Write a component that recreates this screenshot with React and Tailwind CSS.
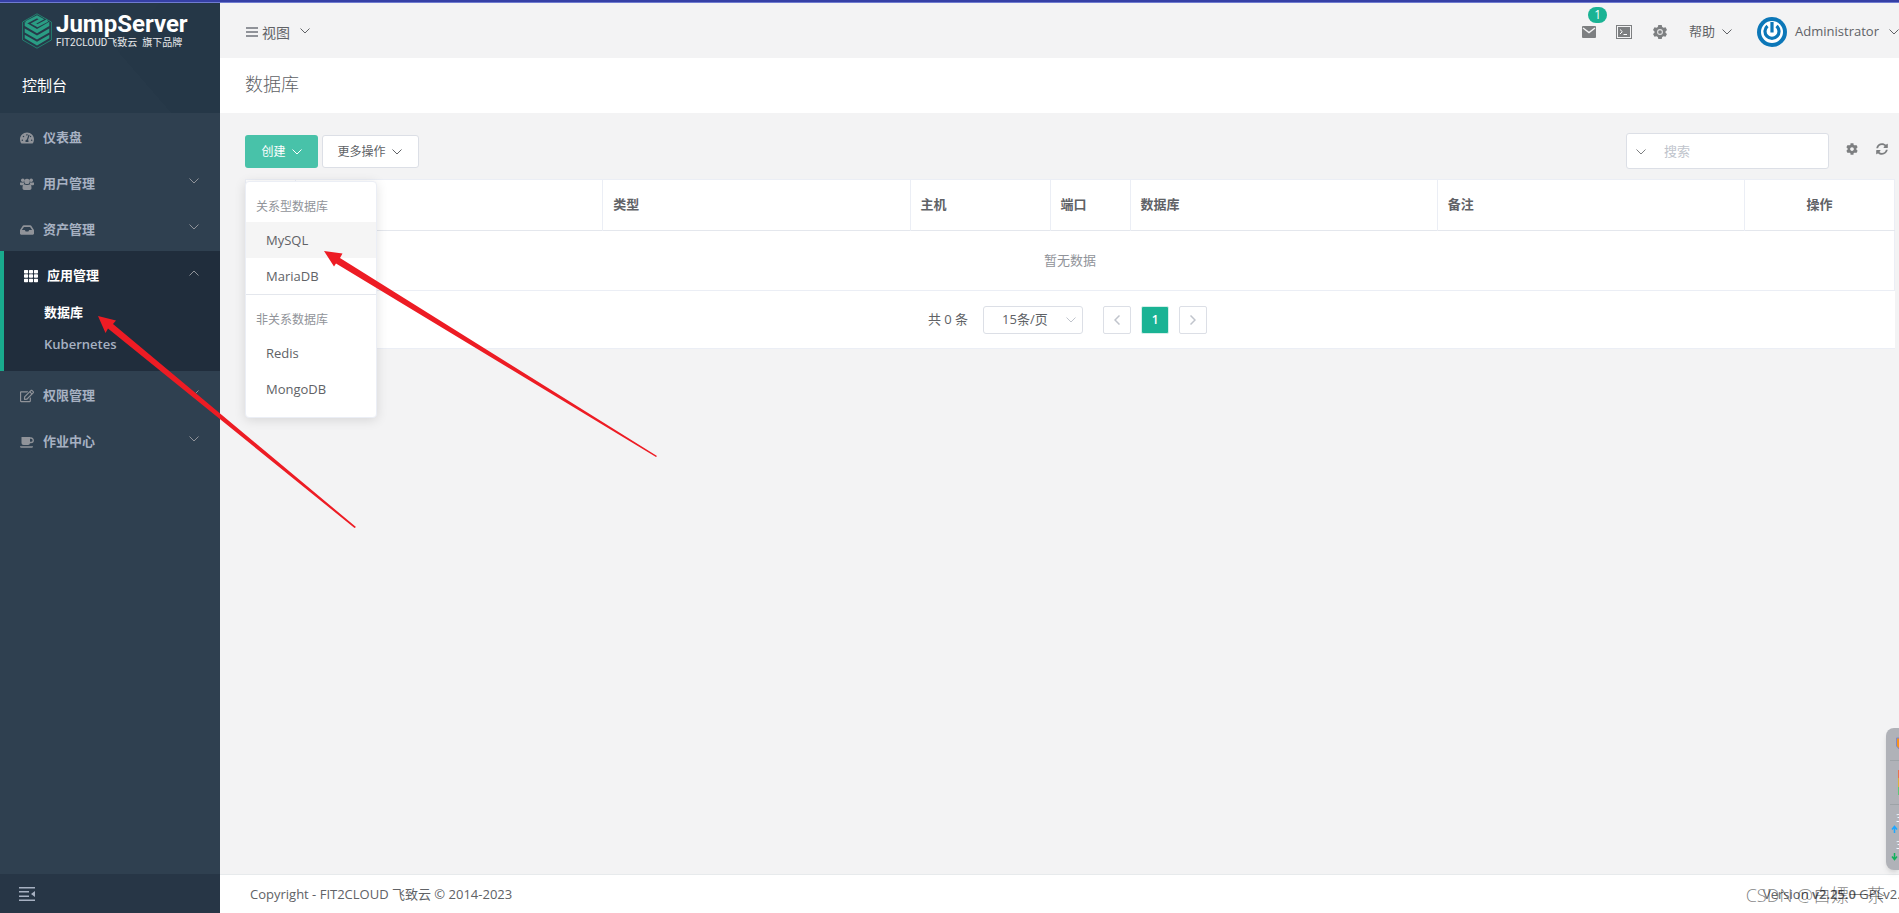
import { useState } from 'react'
import { FaTachometerAlt, FaInbox, FaTh, FaRegEdit, FaCog, FaSyncAlt } from 'react-icons/fa'

function UsersIcon({ className }) {
  return (
    <span className={className}>
      <svg viewBox="0 0 14 12" className="h-3 w-[14px]" fill="currentColor">
        <circle cx="2.8" cy="2.3" r="1.8" />
        <circle cx="11.2" cy="2.3" r="1.8" />
        <circle cx="7" cy="3.4" r="2.7" />
        <path d="M0 4.500h4C4 6 4.300 6.400 3 7.200H.8C.2 7.200 0 6.800 0 6ZM14 4.500h-4c0 1.500-.3 1.900 1 2.700h2.200c.6 0 .8-.4.800-1.200Z" />
        <path d="M3.800 6.200c2 1.100 4.400 1.100 6.400 0 1 .6 1.300 1.900 1.300 3.800 0 1.300-.6 2-1.900 2H4.400c-1.300 0-1.900-.7-1.900-2 0-1.900.3-3.200 1.300-3.800Z" />
      </svg>
    </span>
  )
}

function CoffeeIcon({ className }) {
  return (
    <span className={className}>
      <svg viewBox="0 0 14 11" className="h-[11px] w-[14px]" fill="currentColor">
        <path d="M1.500 0H10v6a2 2 0 0 1-2 2H3.500a2 2 0 0 1-2-2Z" />
        <path d="M10 1h1a2 2 0 0 1 0 4.500h-1" fill="none" stroke="currentColor" strokeWidth="1.300" />
        <path d="M0 9.300h13c0 1-.8 1.500-1.600 1.500H1.600C.8 10.800 0 10.300 0 9.300Z" />
      </svg>
    </span>
  )
}

const menus = [
  { label: '仪表盘', icon: FaTachometerAlt },
  { label: '用户管理', icon: UsersIcon, more: true },
  { label: '资产管理', icon: FaInbox, more: true },
  { label: '应用管理', icon: FaTh, more: true, children: ['数据库', 'Kubernetes'] },
  { label: '权限管理', icon: FaRegEdit, more: true },
  { label: '作业中心', icon: CoffeeIcon, more: true },
]

const createGroups = [
  { title: '关系型数据库', items: ['MySQL', 'MariaDB'] },
  { title: '非关系数据库', items: ['Redis', 'MongoDB'] },
]

function Chevron({ className = '' }) {
  return (
    <svg viewBox="0 0 10 6" className={`h-[6px] w-[10px] shrink-0 ${className}`} fill="none" stroke="currentColor">
      <path d="M0.5 0.5 L5 5 L9.5 0.5" />
    </svg>
  )
}

function Logo() {
  return (
    <a href="#" className="flex items-center gap-1 text-white">
      <svg viewBox="0 0 30 36" className="h-9 w-[30px] shrink-0">
        <path d="M15 .8 29.4 9v18L15 35.2.6 27V9Z" fill="none" stroke="#23806f" strokeWidth="1" />
        <path
          d="M4 9.500 15 3.800 19.500 6.300 11.500 10.600 15.500 12.700 25.500 7.500"
          fill="none"
          stroke="#2a9d84"
          strokeWidth="2.700"
        />
        <path d="M2.700 8.800 15 16 27.300 8.800V13L15 20.300 2.700 13Z" fill="#2a9d84" />
        <path d="M2.700 15.500 15 22.500 27.300 15.500v4L15 26.600 2.700 19.500Z" fill="#2a9d84" />
        <path d="M2.700 21.700 15 28.700 27.300 21.700v3.600L15 32.500 2.700 25.300Z" fill="#2a9d84" />
      </svg>
      <span className="flex flex-col gap-px">
        <span className="font-['Roboto'] text-[24px] leading-6 font-bold">JumpServer</span>
        <span className="font-['Roboto','Noto_Sans_CJK_SC',sans-serif] text-[10px] leading-3 whitespace-pre text-white/90">
          FIT2CLOUD飞致云  旗下品牌
        </span>
      </span>
    </a>
  )
}

function Sidebar() {
  return (
    <aside className="flex w-[220px] shrink-0 flex-col bg-[#2f4050]">
      <div className="relative flex h-[110px] flex-col bg-[#263848] px-[22px] pt-[9px]">
        <svg viewBox="0 0 220 110" className="absolute inset-0 h-full w-full" preserveAspectRatio="none">
          <path d="M0 0h90l30 50 52 60H0Z" fill="#273949" />
          <path d="M120 50 160 0h60v110h-48Z" fill="#253747" />
        </svg>
        <div className="relative">
          <Logo />
          <h2 className="mt-6 text-[15px] leading-6 text-white">控制台</h2>
        </div>
      </div>

      <nav className="flex-1 text-[13px] font-semibold text-[#a7b1c2]">
        {menus.map(({ label, icon: Icon, more, children }) => (
          <div key={label} className={children ? 'border-l-4 border-[#19aa8d] bg-[#202d3c] pb-[10px] text-white' : ''}>
            <a href="#" className="flex h-[46px] items-center px-5 pt-1">
              <Icon className={children ? 'w-[23px] shrink-0 pr-[9px] text-sm' : 'w-[23px] shrink-0 pr-[9px] text-sm text-[#909399]'} />
              <span className="flex-1">{label}</span>
              {more && (
                <Chevron className={children ? 'mr-px mb-[6px] rotate-180 text-[#909399]' : 'mr-px mb-[6px] text-[#909399]'} />
              )}
            </a>
            {children?.map((child, i) => (
              <a
                key={child}
                href="#"
                className={i === 0 ? 'flex h-8 items-center pl-10 text-white' : 'flex h-8 items-center pl-10 text-[#a7b1c2]'}
              >
                {child}
              </a>
            ))}
          </div>
        ))}
      </nav>

      <div className="flex h-[39px] items-center bg-[#273646] pl-[19px]">
        <button type="button" aria-label="收起菜单" className="text-[#a7b1c2]">
          <svg viewBox="0 0 16 14" className="h-[14px] w-4" fill="currentColor">
            <path d="M0 0h16v1.5H0ZM0 4h10v1.5H0ZM0 8.5h10V10H0ZM0 12.5h16V14H0ZM16 4v6l-4-3Z" />
          </svg>
        </button>
      </div>
    </aside>
  )
}

function Header() {
  return (
    <header className="flex h-[55px] items-center justify-between bg-[#f3f3f4] pl-[26px]">
      <button type="button" className="flex items-center pt-1 text-sm">
        <svg viewBox="0 0 12 10" className="mr-1 mb-px h-[10px] w-3" fill="#909399">
          <path d="M0 0h12v2H0ZM0 4h12v2H0ZM0 8h12v2H0Z" />
        </svg>
        视图
        <Chevron className="mb-1 ml-[10px]" />
      </button>

      <div className="flex items-center pt-[2px]">
        <button type="button" aria-label="站内信" className="relative mr-5 text-[#7d7f81]">
          <svg viewBox="0 0 14 12" className="h-3 w-[14px]" fill="currentColor">
            <rect width="14" height="12" rx="1" />
            <path d="M1 2 7 6.5 13 2" fill="none" stroke="#f3f3f4" strokeWidth="1.4" />
          </svg>
          <span className="absolute -top-[19px] left-[6px] h-4 w-[19px] rounded-full bg-[#1ab394] text-center text-xs leading-4 text-white">
            1
          </span>
        </button>
        <button type="button" aria-label="终端" className="mr-[21px] text-[#7d7f81]">
          <svg viewBox="0 0 16 14" className="h-[14px] w-4" fill="none" stroke="currentColor">
            <rect x=".5" y=".5" width="15" height="13" />
            <rect x="2" y="2" width="12" height="10" fill="currentColor" stroke="none" />
            <path d="M4 4.5 6.3 6.7 4 9M7.5 9.5h3.5" stroke="#fff" />
          </svg>
        </button>
        <button type="button" aria-label="设置" className="mr-[22px] text-[#7d7f81]">
          <svg viewBox="0 0 14 14" className="h-[14px] w-[14px]">
            <path
              d="M5.3 0h3.4l.5 2 1.4.8 2-.6 1.4 2.9L12.5 6.400v1.300l1.500 1.300-1.500 2.800-2-.5-1.300.8-.5 1.900H5.300l-.5-1.900-1.300-.8-2 .5L0 9l1.500-1.300V6.400L0 5.100l1.500-2.900 2 .6L4.800 2Z"
              fill="currentColor"
            />
            <circle cx="7" cy="7" r="2.4" fill="none" stroke="#e3e3e4" strokeWidth="1.100" />
          </svg>
        </button>
        <button type="button" className="mr-[25px] flex items-center text-[13px]">
          帮助
          <Chevron className="ml-[7px]" />
        </button>
        <button type="button" className="flex items-center text-[13px]">
          <svg viewBox="0 0 30 30" className="mr-2 h-[30px] w-[30px]" fill="none">
            <circle cx="15" cy="15" r="15" fill="#0c77b8" />
            <circle cx="15" cy="15" r="11" fill="#fff" />
            <path d="M10.500 9a7 7 0 1 0 9 0" stroke="#0c77b8" strokeWidth="3.200" />
            <path d="M15 5v10.500" stroke="#0c77b8" strokeWidth="3.200" />
          </svg>
          Administrator
          <Chevron className="ml-[10px]" />
        </button>
      </div>
    </header>
  )
}

function CreateMenu() {
  return (
    <div className="absolute top-[46px] left-0 z-10 w-[132px] rounded border border-[#ebeef5] bg-white pb-[10px] shadow-[0_2px_12px_rgba(0,0,0,0.12)]">
      {createGroups.map((group, i) => (
        <div key={group.title} className={i > 0 ? 'border-t border-[#e4e7ed] pt-[10px]' : 'pt-[10px]'}>
          <div className="px-[10px] text-xs leading-[30px] text-[#909399]">{group.title}</div>
          {group.items.map((item) => (
            <button
              key={item}
              type="button"
              className={
                item === 'MySQL'
                  ? 'block w-full bg-[#f5f5f5] px-5 text-left text-[13px] leading-9'
                  : 'block w-full px-5 text-left text-[13px] leading-9'
              }
            >
              {item}
            </button>
          ))}
        </div>
      ))}
    </div>
  )
}

function Toolbar() {
  const [open, setOpen] = useState(true)

  return (
    <div className="flex items-center justify-between pr-[7px]">
      <div className="flex gap-1">
        <div className="relative">
          <button
            type="button"
            onClick={() => setOpen(!open)}
            className="flex h-[33px] w-[73px] items-center justify-center gap-[6px] rounded-[3px] bg-[#48c2a9] pt-[2px] text-xs text-white"
          >
            创建
            <Chevron />
          </button>
          {open && <CreateMenu />}
        </div>
        <button
          type="button"
          className="flex h-[33px] w-[97px] items-center justify-center gap-[6px] rounded-[3px] border border-[#dcdfe6] bg-white pt-[2px] pr-[2px] text-xs"
        >
          更多操作
          <Chevron />
        </button>
      </div>

      <div className="flex items-center text-[#7d7f81]">
        <div className="mr-[17px] flex h-9 w-[203px] items-center rounded-[3px] border border-[#dcdfe6] bg-white pt-[2px] pl-[9px]">
          <Chevron />
          <input
            type="text"
            aria-label="搜索"
            placeholder="搜索"
            className="ml-[18px] w-full min-w-0 text-[13px] outline-none placeholder:text-[#c0c4cc]"
          />
        </div>
        <button type="button" aria-label="列设置" className="mr-[18px] pb-1">
          <FaCog className="h-3 w-3" />
        </button>
        <button type="button" aria-label="刷新" className="pb-1">
          <FaSyncAlt className="h-3 w-3" />
        </button>
      </div>
    </div>
  )
}

function DatabaseTable() {
  const th = 'border-r border-[#ebeef5] px-[10px] text-left font-semibold'

  return (
    <table className="w-full table-fixed border border-[#ebeef5] bg-white text-[13px]">
      <colgroup>
        <col className="w-[50px]" />
        <col />
        <col />
        <col className="w-[140px]" />
        <col className="w-[80px]" />
        <col />
        <col />
        <col className="w-[150px]" />
      </colgroup>
      <thead>
        <tr className="h-[51px] border-b border-[#e4e7ed]">
          <th className={th}>
            <input type="checkbox" aria-label="全选" />
          </th>
          <th className={th} />
          <th className={th}>类型</th>
          <th className={th}>主机</th>
          <th className={th}>端口</th>
          <th className={th}>数据库</th>
          <th className={th}>备注</th>
          <th className="text-center font-semibold">操作</th>
        </tr>
      </thead>
      <tbody>
        <tr className="h-[60px]">
          <td colSpan={8} className="text-center text-[#909399]">
            暂无数据
          </td>
        </tr>
      </tbody>
    </table>
  )
}

function Pagination() {
  return (
    <div className="flex h-[58px] items-center justify-center border-b border-[#ebeef5] bg-white pr-[5px] text-[13px]">
      <span className="mr-[15px]">共 0 条</span>
      <div className="relative mr-5 flex items-center">
        <select
          aria-label="每页条数"
          className="h-7 w-[100px] appearance-none rounded-[3px] border border-[#dcdfe6] bg-white pl-[18px] outline-none"
        >
          <option>15条/页</option>
        </select>
        <Chevron className="pointer-events-none absolute right-[7px] text-[#c0c4cc]" />
      </div>
      <div className="flex gap-[10px]">
        <button
          type="button"
          aria-label="上一页"
          className="flex h-7 w-7 items-center justify-center rounded-xs border border-[#dcdfe6] text-[#c0c4cc]"
        >
          <svg viewBox="0 0 6 10" className="h-[10px] w-[6px]" fill="none" stroke="currentColor" strokeWidth="1.5">
            <path d="M5.500.5 1 5l4.500 4.500" />
          </svg>
        </button>
        <button type="button" className="h-7 w-7 rounded-xs border border-[#d4efe9] bg-[#1ab394] text-xs font-semibold text-white">
          1
        </button>
        <button
          type="button"
          aria-label="下一页"
          className="flex h-7 w-7 items-center justify-center rounded-xs border border-[#dcdfe6] text-[#c0c4cc]"
        >
          <svg viewBox="0 0 6 10" className="h-[10px] w-[6px]" fill="none" stroke="currentColor" strokeWidth="1.5">
            <path d="M.5.5 5 5 .5 9.500" />
          </svg>
        </button>
      </div>
    </div>
  )
}

function Footer() {
  return (
    <footer className="relative flex h-[39px] items-center justify-between overflow-hidden border-t border-[#e7eaec] bg-white pt-[2px] pl-[30px] text-[13px]">
      <span>Copyright - FIT2CLOUD 飞致云 © 2014-2023</span>
      <div className="w-[136px] whitespace-nowrap">
        Version <strong className="font-semibold">v2.25.0</strong> GPLv2.
      </div>
      <div className="absolute right-[14px] text-lg font-light whitespace-nowrap text-black/50">CSDN @白嫖一茶</div>
    </footer>
  )
}

// Network monitor docked on the right edge of the desktop
function MonitorWidget() {
  return (
    <div className="absolute right-0 bottom-[43px] h-[142px] w-[13px] overflow-hidden rounded-l-lg bg-[#b0b2b8] shadow-md">
      <svg viewBox="0 0 13 142" className="h-full w-full">
        <path d="M13 10h-2.500v8l2.500 3" fill="#f7941d" stroke="#7d86c8" />
        <path d="M4 32.500h9M4 76.500h9" stroke="#9ea3a8" />
        <path d="M12.500 42v8" stroke="#e8734a" />
        <path d="M12.500 50v9" stroke="#d9b23c" />
        <path d="M12.500 59v8" stroke="#5fc878" />
        <path d="M8.500 105v-6M6 101.500 8.500 98.500 11 101.500" fill="none" stroke="#1ea7ff" strokeWidth="1.500" />
        <path d="M8.500 125v6M6 128.500 8.500 131.500 11 128.500" fill="none" stroke="#12b25c" strokeWidth="1.500" />
        <text x="10" y="94" fontSize="10" fill="#fff">3</text>
        <text x="10" y="121" fontSize="10" fill="#fff">3</text>
      </svg>
    </div>
  )
}

function Arrows() {
  return (
    <svg className="pointer-events-none absolute top-0 left-0 z-20 h-[540px] w-[680px]" viewBox="0 2 680 540" fill="#ed1c24">
      <path d="M98 316 116 320.500 113 324 356 527 354.500 528 108 328.500 105.500 333Z" />
      <path d="M324 251 342.500 253.500 340 258 657 456 656 457 336 263.500 334 266.500Z" />
    </svg>
  )
}

export default function App() {
  return (
    <div className="relative flex min-h-screen flex-col overflow-hidden border-t-2 border-[#353fa5] bg-[#f3f3f4] font-['Open_Sans','Noto_Sans_CJK_SC',sans-serif] text-[#606266]">
      <div className="h-px bg-[#6f7bd0]" />
      <div className="flex flex-1">
        <Sidebar />
        <div className="flex min-w-0 flex-1 flex-col">
          <Header />
          <div className="flex h-[55px] items-center bg-white pb-1 pl-[25px]">
            <h1 className="text-lg font-light">数据库</h1>
          </div>
          <main className="flex-1 pt-5 pr-1 pl-[25px]">
            <Toolbar />
            <div className="mt-[10px]">
              <DatabaseTable />
              <Pagination />
            </div>
          </main>
          <Footer />
        </div>
      </div>
      <MonitorWidget />
      <Arrows />
    </div>
  )
}
